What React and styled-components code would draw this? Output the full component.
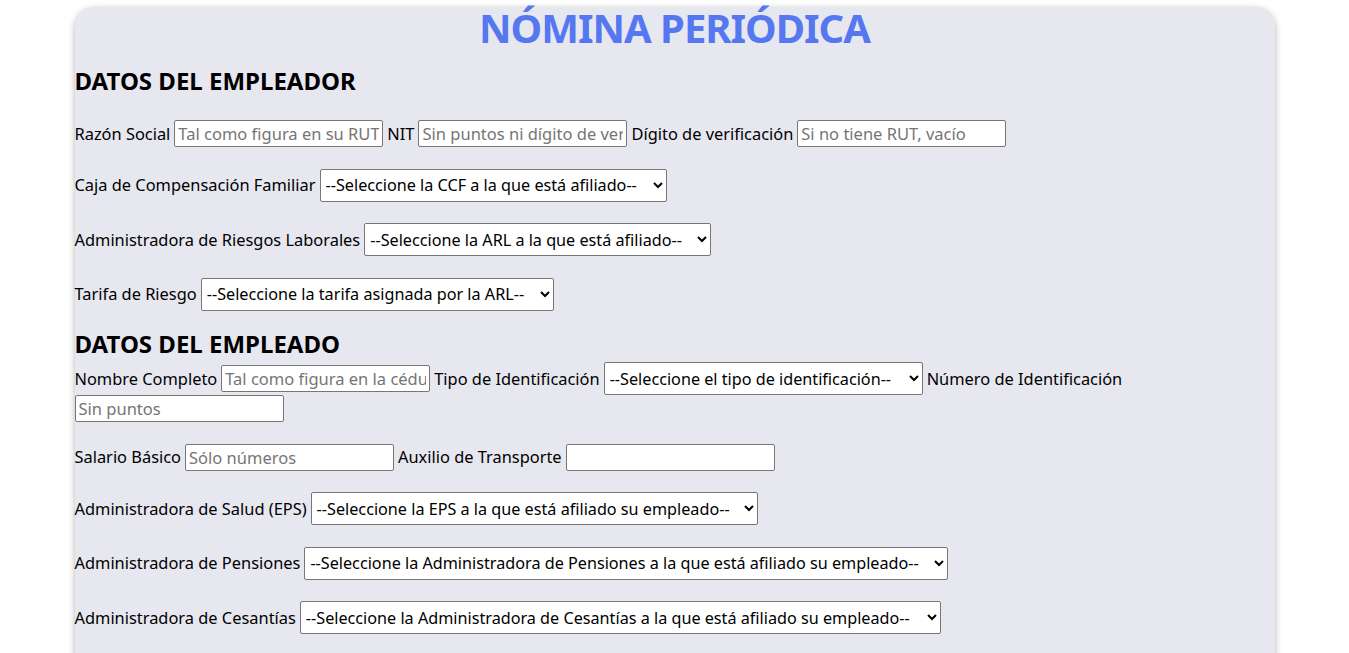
import React from "react";
import styled, { createGlobalStyle } from "styled-components";

const Global = createGlobalStyle`
  html, body { margin: 0; padding: 0; background: #ffffff; }
  body { font-family: "Noto Sans", "DejaVu Sans", sans-serif; color: #000; }
  * { box-sizing: border-box; }
`;

const Card = styled.main`
  width: 1200px;
  margin: 7px auto 0;
  background: #e7e7f0;
  border-radius: 20px;
  box-shadow: 0 2px 7px rgba(0, 0, 0, 0.3);
  padding-bottom: 120px;
`;

const Title = styled.h1`
  margin: 0;
  text-align: center;
  font-size: 40px;
  line-height: 42px;
  letter-spacing: -1px;
  font-weight: 700;
  color: #5577f0;
`;

const Section = styled.section`
  display: flex;
  flex-direction: column;
  margin-top: ${(p) => p.$top}px;
`;

const Heading = styled.h2`
  margin: 0 0 ${(p) => p.$after}px;
  font-size: 24px;
  line-height: 30px;
  font-weight: 700;
`;

const RowList = styled.div`
  display: flex;
  flex-direction: column;
  gap: 21.5px;
`;

const Row = styled.div`
  display: flex;
  flex-wrap: wrap;
  align-items: center;
  column-gap: 4px;
  row-gap: 0;
`;

const Break = styled.span`
  flex-basis: 100%;
  height: 0;
`;

const Label = styled.label`
  font-size: 16.4px;
  line-height: 24px;
  white-space: nowrap;
`;

const TextInput = styled.input`
  width: 209px;
  height: 27px;
  padding: 0 3px;
  border: 1px solid #767676;
  border-radius: 2px;
  background: #fff;
  font-family: "Noto Sans", sans-serif;
  font-size: 16.5px;
  color: #000;
  &::placeholder { color: #757575; }
`;

const Select = styled.select`
  width: ${(p) => p.$w}px;
  height: 33px;
  padding: 0 0 0 1px;
  border: 1px solid #767676;
  border-radius: 2px;
  background: #fff;
  font-family: "Noto Sans", sans-serif;
  font-size: 16.2px;
  color: #000;
`;

function Field({ label, placeholder }) {
  return (
    <>
      <Label>{label}</Label>
      <TextInput placeholder={placeholder} />
    </>
  );
}

function Choice({ label, text, w }) {
  return (
    <>
      <Label>{label}</Label>
      <Select $w={w} defaultValue="">
        <option value="">{text}</option>
      </Select>
    </>
  );
}

export default function App() {
  return (
    <>
      <Global />
      <Card>
        <Title>NÓMINA PERIÓDICA</Title>
        <Section $top={16.5}>
          <Heading $after={24.5}>DATOS DEL EMPLEADOR</Heading>
          <RowList>
            <Row>
              <Field label="Razón Social" placeholder="Tal como figura en su RUT" />
              <Field label="NIT" placeholder="Sin puntos ni dígito de verificación" />
              <Field label="Dígito de verificación" placeholder="Si no tiene RUT, vacío" />
            </Row>
            <Row>
              <Choice label="Caja de Compensación Familiar" text="--Seleccione la CCF a la que está afiliado--" w={347} />
            </Row>
            <Row>
              <Choice label="Administradora de Riesgos Laborales" text="--Seleccione la ARL a la que está afiliado--" w={347} />
            </Row>
            <Row>
              <Choice label="Tarifa de Riesgo" text="--Seleccione la tarifa asignada por la ARL--" w={353} />
            </Row>
          </RowList>
        </Section>
        <Section $top={18}>
          <Heading $after={3.5}>DATOS DEL EMPLEADO</Heading>
          <RowList>
            <Row>
              <Field label="Nombre Completo" placeholder="Tal como figura en la cédula" />
              <Choice label="Tipo de Identificación" text="--Seleccione el tipo de identificación--" w={319} />
              <Label>Número de Identificación</Label>
              <Break />
              <TextInput placeholder="Sin puntos" />
            </Row>
            <Row>
              <Field label="Salario Básico" placeholder="Sólo números" />
              <Field label="Auxilio de Transporte" placeholder="" />
            </Row>
            <Row>
              <Choice label="Administradora de Salud (EPS)" text="--Seleccione la EPS a la que está afiliado su empleado--" w={447} />
            </Row>
            <Row>
              <Choice label="Administradora de Pensiones" text="--Seleccione la Administradora de Pensiones a la que está afiliado su empleado--" w={644} />
            </Row>
            <Row>
              <Choice label="Administradora de Cesantías" text="--Seleccione la Administradora de Cesantías a la que está afiliado su empleado--" w={641} />
            </Row>
          </RowList>
        </Section>
      </Card>
    </>
  );
}
